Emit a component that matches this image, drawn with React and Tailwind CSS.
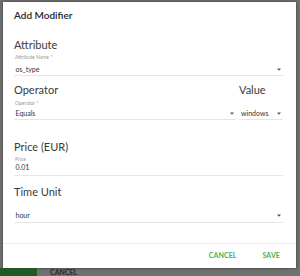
import React from "react";

const Arrow = () => (
  <svg width="4" height="3" viewBox="0 0 4 3" className="shrink-0">
    <path d="M0 0.5 L4 0.5 L2 2.8 Z" fill="#555" />
  </svg>
);

const Label = ({ children, className = "" }) => (
  <div className={"h-[6px] leading-[6px] text-[5px] text-[#9a9a9a] pl-[1px] " + className}>{children}</div>
);

const Heading = ({ children, className = "" }) => (
  <div className={"h-[15px] leading-[15px] text-[11px] text-[#3a3a3a] " + className}>{children}</div>
);

const Field = ({ value, select = true, className = "" }) => (
  <div className={"flex items-end border-b border-[#e6e6e6] pl-[1.5px] pr-[2px] " + className}>
    <div className="flex-1 flex items-center h-[10px]">
      <span className="flex-1 text-[7px] leading-[10px] text-[#333]">{value}</span>
      {select && <Arrow />}
    </div>
  </div>
);

export default function App() {
  return (
    <div
      className="w-[300px] h-[276px] bg-[#717171] overflow-hidden flex flex-col"
      style={{ fontFamily: "Lato, 'Open Sans', sans-serif" }}
    >
      <div className="ml-[3px] mt-[2px] w-[293px] h-[270px] bg-white flex flex-col shadow-[0_0_3px_rgba(0,0,0,0.5)]">
        <div className="h-[26px] flex items-center pl-[11px] text-[10px] font-semibold text-[#262626]">
          Add Modifier
        </div>
        <div className="flex-1 pl-[11px] pr-[13px]">
          <Heading className="mt-[9px]">Attribute</Heading>
          <Label className="mt-[2px]">Attribute Name *</Label>
          <Field value="os_type" className="h-[16px] pb-[1px]" />
          <div className="flex gap-[3px] mt-[6px]">
            <div className="flex-1">
              <Heading>Operator</Heading>
              <Label className="mt-[3px]">Operator *</Label>
              <Field value="Equals" className="h-[14px] pb-[1px]" />
            </div>
            <div className="w-[44px]">
              <Heading>Value</Heading>
              <div className="h-[6px] mt-[3px]" />
              <Field value="windows" className="h-[14px] pb-[1px] pl-[2px]" />
            </div>
          </div>
          <Heading className="mt-[19px]">Price (EUR)</Heading>
          <Label className="mt-[2px]">Price</Label>
          <Field value="0.01" select={false} className="h-[14px] pb-[3px]" />
          <Heading className="mt-[8px]">Time Unit</Heading>
          <Field value="hour" className="h-[24px] pb-[2px]" />
        </div>
        <div className="h-[25px] pb-[1px] border-t border-[#ececec] flex items-center justify-end gap-[26px] pr-[16px] text-[7px] font-bold text-[#4caf50] tracking-[0.1px]">
          <span>CANCEL</span>
          <span>SAVE</span>
        </div>
      </div>
      <div className="flex-1 flex items-start">
        <div className="w-[37px] h-full bg-[#1f5a24]" />
        <div className="ml-[13px] mt-[1px] leading-[7px] text-[7px] font-bold text-[#2a2a2a]">CANCEL</div>
      </div>
    </div>
  );
}
